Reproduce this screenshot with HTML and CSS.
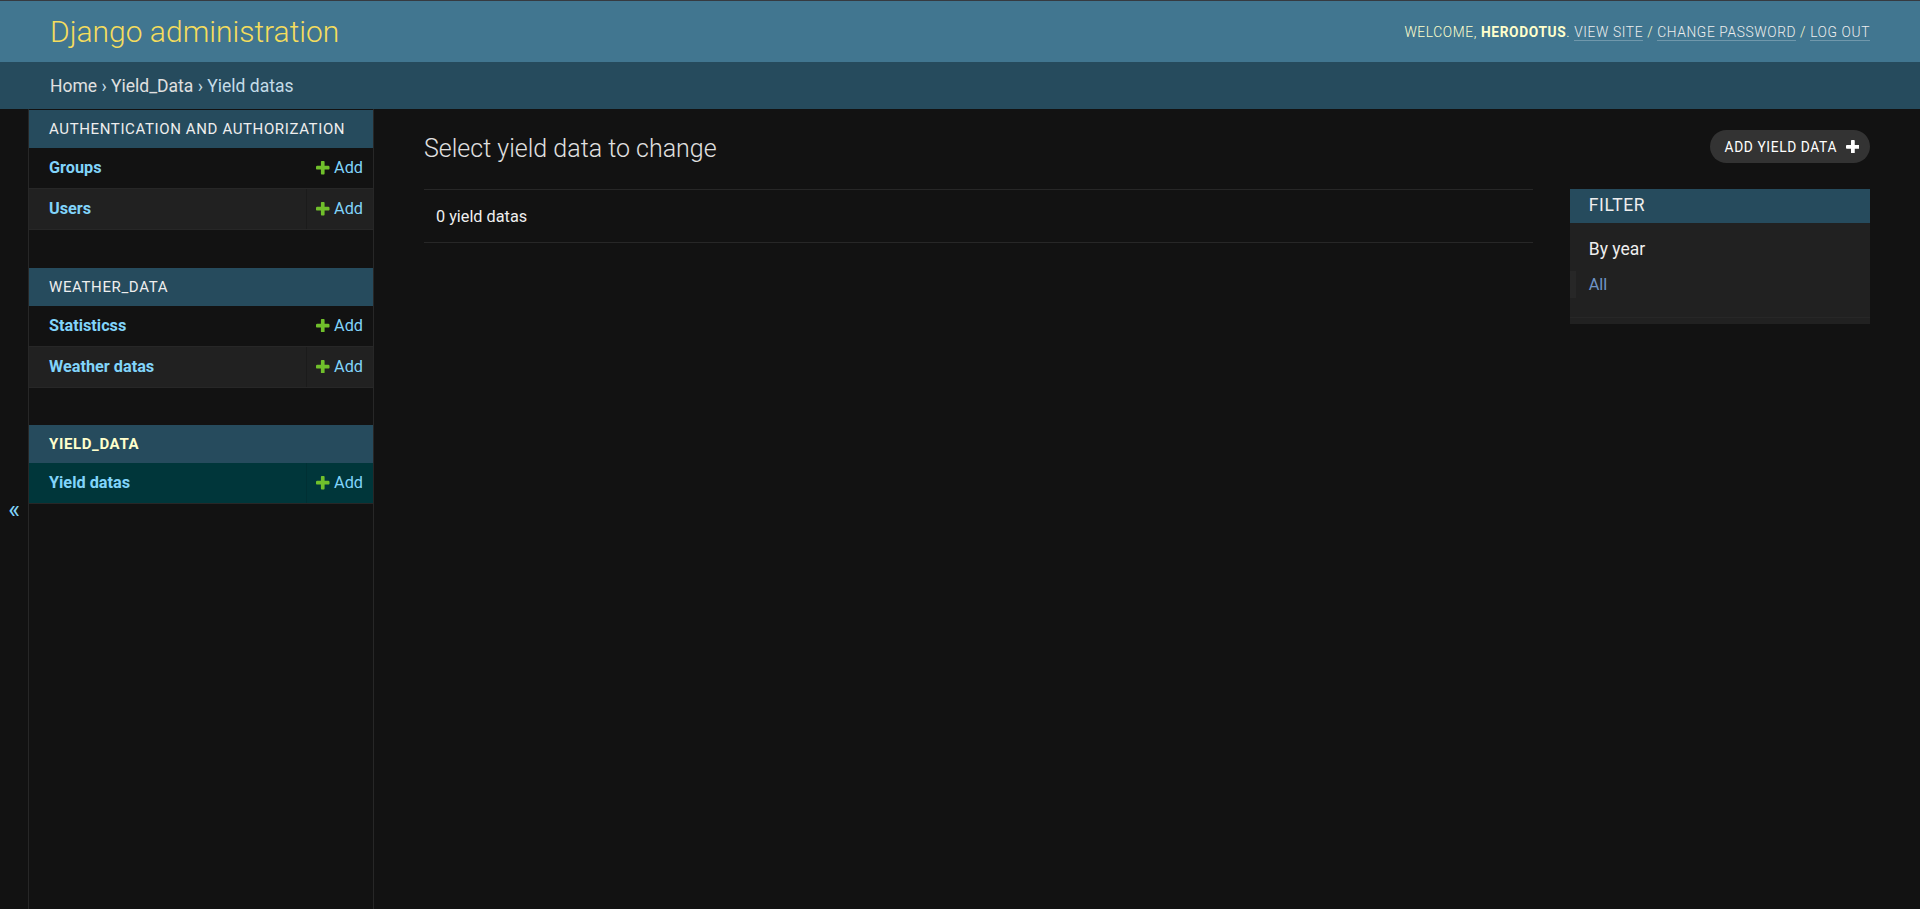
FILE: index.html
```html
<!DOCTYPE html>
<html lang="en">
<head>
<meta charset="utf-8">
<title>Select yield data to change | Django site admin</title>
<link rel="stylesheet" href="styles.css">
</head>
<body>
<div class="container">
  <header class="header">
    <div class="branding">
      <h1 class="site-name"><a href="#">Django administration</a></h1>
    </div>
    <div class="user-tools">
      Welcome, <strong>herodotus</strong>.
      <a href="#">View site</a> /
      <a href="#">Change password</a> /
      <a href="#">Log out</a>
    </div>
  </header>

  <nav class="breadcrumbs">
    <a href="#">Home</a> › <a href="#">Yield_Data</a> › Yield datas
  </nav>

  <div class="main">
    <button class="toggle-nav-sidebar" aria-label="Toggle navigation">«</button>

    <nav class="nav-sidebar">
      <div class="module">
        <div class="module-caption"><a class="section" href="#">Authentication and Authorization</a></div>
        <div class="model-row">
          <div class="model-name"><a href="#">Groups</a></div>
          <div class="model-add"><a class="addlink" href="#"><svg class="add-icon" viewBox="192 192 1408 1408"><path fill="#70bf2b" d="M1600 796v192q0 40-28 68t-68 28h-416v416q0 40-28 68t-68 28h-192q-40 0-68-28t-28-68v-416h-416q-40 0-68-28t-28-68v-192q0-40 28-68t68-28h416v-416q0-40 28-68t68-28h192q40 0 68 28t28 68v416h416q40 0 68 28t28 68z"/></svg>Add</a></div>
        </div>
        <div class="model-row">
          <div class="model-name"><a href="#">Users</a></div>
          <div class="model-add"><a class="addlink" href="#"><svg class="add-icon" viewBox="192 192 1408 1408"><path fill="#70bf2b" d="M1600 796v192q0 40-28 68t-68 28h-416v416q0 40-28 68t-68 28h-192q-40 0-68-28t-28-68v-416h-416q-40 0-68-28t-28-68v-192q0-40 28-68t68-28h416v-416q0-40 28-68t68-28h192q40 0 68 28t28 68v416h416q40 0 68 28t28 68z"/></svg>Add</a></div>
        </div>
      </div>

      <div class="module">
        <div class="module-caption"><a class="section" href="#">Weather_Data</a></div>
        <div class="model-row">
          <div class="model-name"><a href="#">Statisticss</a></div>
          <div class="model-add"><a class="addlink" href="#"><svg class="add-icon" viewBox="192 192 1408 1408"><path fill="#70bf2b" d="M1600 796v192q0 40-28 68t-68 28h-416v416q0 40-28 68t-68 28h-192q-40 0-68-28t-28-68v-416h-416q-40 0-68-28t-28-68v-192q0-40 28-68t68-28h416v-416q0-40 28-68t68-28h192q40 0 68 28t28 68v416h416q40 0 68 28t28 68z"/></svg>Add</a></div>
        </div>
        <div class="model-row">
          <div class="model-name"><a href="#">Weather datas</a></div>
          <div class="model-add"><a class="addlink" href="#"><svg class="add-icon" viewBox="192 192 1408 1408"><path fill="#70bf2b" d="M1600 796v192q0 40-28 68t-68 28h-416v416q0 40-28 68t-68 28h-192q-40 0-68-28t-28-68v-416h-416q-40 0-68-28t-28-68v-192q0-40 28-68t68-28h416v-416q0-40 28-68t68-28h192q40 0 68 28t28 68v416h416q40 0 68 28t28 68z"/></svg>Add</a></div>
        </div>
      </div>

      <div class="module current-app">
        <div class="module-caption"><a class="section" href="#">Yield_Data</a></div>
        <div class="model-row current-model">
          <div class="model-name"><a href="#">Yield datas</a></div>
          <div class="model-add"><a class="addlink" href="#"><svg class="add-icon" viewBox="192 192 1408 1408"><path fill="#70bf2b" d="M1600 796v192q0 40-28 68t-68 28h-416v416q0 40-28 68t-68 28h-192q-40 0-68-28t-28-68v-416h-416q-40 0-68-28t-28-68v-192q0-40 28-68t68-28h416v-416q0-40 28-68t68-28h192q40 0 68 28t28 68v416h416q40 0 68 28t28 68z"/></svg>Add</a></div>
        </div>
      </div>
    </nav>

    <div class="content">
      <div class="title-row">
        <h1 class="page-title">Select yield data to change</h1>
        <ul class="object-tools">
          <li><a class="tool-add" href="#">Add yield data<svg class="tool-icon" viewBox="192 192 1408 1408"><path fill="#ffffff" d="M1600 796v192q0 40-28 68t-68 28h-416v416q0 40-28 68t-68 28h-192q-40 0-68-28t-28-68v-416h-416q-40 0-68-28t-28-68v-192q0-40 28-68t68-28h416v-416q0-40 28-68t68-28h192q40 0 68 28t28 68v416h416q40 0 68 28t28 68z"/></svg></a></li>
        </ul>
      </div>

      <div class="changelist">
        <div class="changelist-main">
          <p class="paginator">0 yield datas</p>
        </div>
        <div class="changelist-filter">
          <h2 class="filter-title">Filter</h2>
          <h3 class="filter-heading">By year</h3>
          <ul class="filter-list">
            <li class="selected"><a href="#">All</a></li>
          </ul>
        </div>
      </div>
    </div>
  </div>
</div>
</body>
</html>
```

FILE: styles.css
```css
* {
  box-sizing: border-box;
}

html,
body {
  margin: 0;
  padding: 0;
}

body {
  font-family: Roboto, "Lucida Grande", "DejaVu Sans", Verdana, Arial, sans-serif;
  font-size: 17.5px;
  color: #eeeeee;
  background: #121212;
}

a {
  text-decoration: none;
}

.container {
  display: flex;
  flex-direction: column;
  min-height: 100vh;
  border-top: 1px solid #363a40;
}

/* Header */
.header {
  display: flex;
  justify-content: space-between;
  align-items: center;
  padding: 12.5px 50px;
  background: #417690;
  color: #ffffcc;
}

.site-name {
  margin: 0;
  font-size: 30px;
  font-weight: 300;
  line-height: 36px;
}

.site-name a {
  color: #f5dd5d;
}

.user-tools {
  font-size: 13.75px;
  font-weight: 300;
  letter-spacing: 0.625px;
  text-transform: uppercase;
  color: #ffffcc;
  white-space: nowrap;
}

.user-tools strong {
  font-weight: 700;
}

.user-tools a {
  color: #eeeeee;
  border-bottom: 1.25px solid rgba(255, 255, 255, 0.25);
}

/* Breadcrumbs */
.breadcrumbs {
  padding: 12.5px 50px;
  line-height: 22px;
  background: #264b5d;
  color: #c4dce8;
  font-size: 17.5px;
}

.breadcrumbs a {
  color: #e0e0e0;
}

/* Main layout */
.main {
  flex: 1 1 auto;
  display: flex;
}

.toggle-nav-sidebar {
  flex: 0 0 29px;
  display: flex;
  align-items: center;
  justify-content: center;
  padding: 0;
  border: 0;
  border-right: 1px solid #272727;
  background: #121212;
  color: #81d4fa;
  font-family: Roboto, sans-serif;
  font-size: 25px;
  cursor: pointer;
}

.nav-sidebar {
  flex: 0 0 345px;
  padding-top: 1px;
  border-right: 1px solid #272727;
}

.module {
  margin-bottom: 37.5px;
}

.module-caption {
  padding: 10px 10px 10px 20px;
  font-size: 15px;
  line-height: 18px;
  font-weight: 400;
  letter-spacing: 0.625px;
  text-transform: uppercase;
  background: #264b5d;
}

.module-caption a {
  color: #eeeeee;
}

.current-app .module-caption a {
  color: #ffffcc;
  font-weight: 700;
}

.model-row {
  display: flex;
  border-bottom: 1px solid #272727;
  font-size: 16.25px;
  line-height: 20px;
}

.model-row:nth-child(even) {
  background: #121212;
}

.model-row:nth-child(odd) {
  background: #212121;
}

.model-row.current-model {
  background: #00363a;
}

.model-name {
  flex: 1 1 auto;
  padding: 10px 10px 10px 20px;
  font-weight: 700;
}

.model-name a {
  color: #81d4fa;
}

.model-add {
  flex: 0 0 auto;
  display: flex;
  padding: 10px;
  white-space: nowrap;
}

.model-row:nth-child(odd) .model-add {
  box-shadow: inset 1px 0 0 #1b1b1b;
}

.model-row.current-model .model-add {
  box-shadow: inset 1px 0 0 #003034;
}

.addlink {
  display: flex;
  align-items: center;
  height: 20px;
  color: #81d4fa;
  font-weight: 400;
}

.add-icon {
  width: 13.5px;
  height: 13.5px;
  margin-right: 4.5px;
}

/* Content */
.content {
  flex: 1 1 auto;
  min-width: 0;
  padding: 25px 50px;
}

.title-row {
  display: flex;
  justify-content: space-between;
  align-items: flex-start;
  margin-bottom: 25px;
}

.page-title {
  margin: 0;
  font-size: 25px;
  font-weight: 300;
  line-height: 29.5px;
  color: #e0e0e0;
}

.object-tools {
  list-style: none;
  margin: -4px 0 0;
  padding: 0;
}

.tool-add {
  display: flex;
  align-items: center;
  height: 33px;
  padding: 0 10.75px 0 15px;
  border-radius: 17px;
  background: #333333;
  color: #ffffff;
  font-size: 13.75px;
  font-weight: 400;
  letter-spacing: 0.625px;
  text-transform: uppercase;
}

.tool-icon {
  width: 13.75px;
  height: 13.75px;
  margin-left: 8.5px;
}

.changelist {
  display: flex;
  align-items: flex-start;
}

.changelist-main {
  flex: 1 1 auto;
  min-width: 0;
}

.paginator {
  margin: 0;
  padding: 13px 12px 12px;
  font-size: 16.25px;
  line-height: 27.5px;
  color: #eeeeee;
  border-top: 1px solid #272727;
  border-bottom: 1px solid #272727;
}

.changelist-filter {
  flex: 0 0 300px;
  margin-left: 37.5px;
  background: #212121;
}

.filter-title {
  margin: 0 0 16px;
  padding: 6.5px 18.75px;
  font-size: 17.5px;
  font-weight: 400;
  line-height: 21px;
  letter-spacing: 0.625px;
  text-transform: uppercase;
  background: #264b5d;
  color: #eeeeee;
}

.filter-heading {
  margin: 0 0 11px;
  padding: 0 18.75px;
  font-size: 17.5px;
  font-weight: 400;
  line-height: 21px;
  color: #eeeeee;
}

.filter-list {
  list-style: none;
  margin: 5px 0 6.25px;
  padding: 0 18.75px 18.75px;
  border-bottom: 1px solid #272727;
}

.filter-list li {
  font-size: 16.25px;
  line-height: 25px;
  padding: 1.25px 0;
}

.filter-list li.selected {
  border-left: 6px solid #272727;
  padding-left: 12.75px;
  margin-left: -18.75px;
}

.filter-list li a {
  color: #e0e0e0;
}

.filter-list li.selected a {
  color: #6f94c6;
}
```
